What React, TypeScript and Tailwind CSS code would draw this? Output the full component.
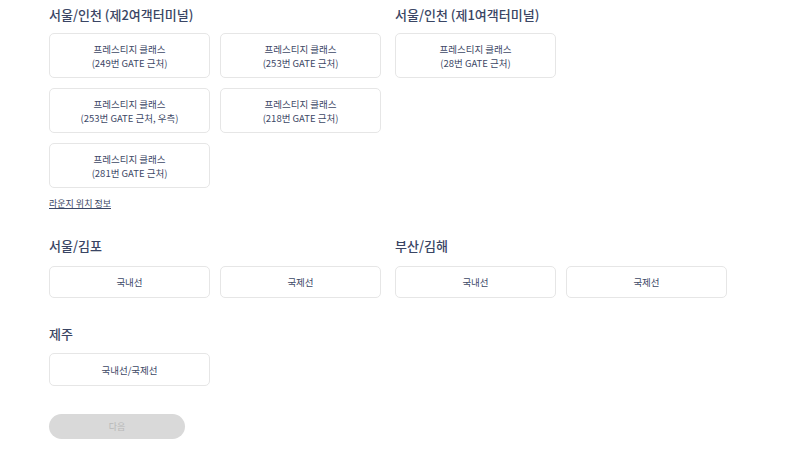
import React from "react";

const font = { fontFamily: '"Noto Sans CJK KR", "Noto Sans", sans-serif' };

function Card({ lines, h = "h-[45px]" }: { lines: string[]; h?: string }) {
  return (
    <div
      className={`${h} w-[161px] flex flex-col items-center justify-center rounded-[5px] border border-[#e6e6e6] bg-white text-[9.5px] leading-[14px] text-[#3d4866]`}
    >
      {lines.map((l, i) => (
        <span key={i}>{l}</span>
      ))}
    </div>
  );
}

function Heading({ children }: { children: React.ReactNode }) {
  return (
    <div className="text-[13px] leading-[16px] font-medium text-[#3a4564] h-4">{children}</div>
  );
}

export default function App() {
  return (
    <div className="w-[800px] h-[455px] bg-white pl-[49px] pt-[7px]" style={font}>
      <div className="grid grid-cols-[332px_332px] gap-x-[14px]">
        <div>
          <Heading>서울/인천 (제2여객터미널)</Heading>
          <div className="mt-[10px] grid grid-cols-[161px_161px] gap-[10px]">
            <Card lines={["프레스티지 클래스", "(249번 GATE 근처)"]} />
            <Card lines={["프레스티지 클래스", "(253번 GATE 근처)"]} />
            <Card lines={["프레스티지 클래스", "(253번 GATE 근처, 우측)"]} />
            <Card lines={["프레스티지 클래스", "(218번 GATE 근처)"]} />
            <Card lines={["프레스티지 클래스", "(281번 GATE 근처)"]} />
          </div>
          <div className="mt-[10px] text-[9px] leading-[12px] text-[#3a4564] underline">라운지 위치 정보</div>
        </div>
        <div>
          <Heading>서울/인천 (제1여객터미널)</Heading>
          <div className="mt-[10px] grid grid-cols-[161px_161px] gap-[10px]">
            <Card lines={["프레스티지 클래스", "(28번 GATE 근처)"]} />
          </div>
        </div>
      </div>

      <div className="mt-[28px] grid grid-cols-[332px_332px] gap-x-[14px]">
        <div>
          <Heading>서울/김포</Heading>
          <div className="mt-[12px] grid grid-cols-[161px_161px] gap-[10px]">
            <Card h="h-[32px]" lines={["국내선"]} />
            <Card h="h-[32px]" lines={["국제선"]} />
          </div>
        </div>
        <div>
          <Heading>부산/김해</Heading>
          <div className="mt-[12px] grid grid-cols-[161px_161px] gap-[10px]">
            <Card h="h-[32px]" lines={["국내선"]} />
            <Card h="h-[32px]" lines={["국제선"]} />
          </div>
        </div>
      </div>

      <div className="mt-[28px]">
        <Heading>제주</Heading>
        <div className="mt-[11px]">
          <Card h="h-[33px]" lines={["국내선/국제선"]} />
        </div>
      </div>

      <div className="mt-[28px] w-[136px] h-[25px] rounded-full bg-[#d9d9d9] flex items-center justify-center text-[9px] text-[#b8b8b8]">
        다음
      </div>
    </div>
  );
}
